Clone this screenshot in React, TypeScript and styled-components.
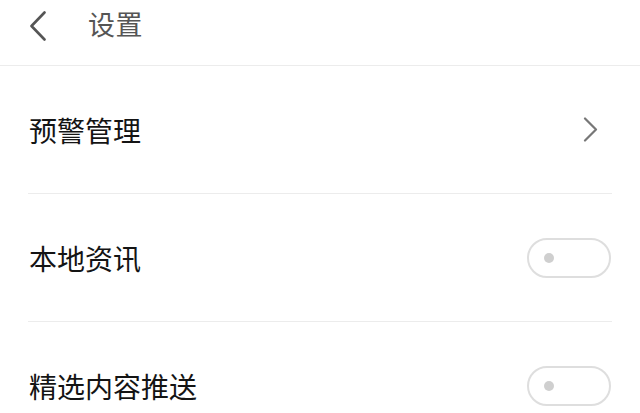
import styled, { createGlobalStyle } from "styled-components";

const GlobalStyle = createGlobalStyle`
	html, body {
		margin: 0;
		padding: 0;
		background: #fff;
	}
	body {
		font-family: "Noto Sans CJK SC", "Noto Sans", sans-serif;
		overflow: hidden;
	}
`;

type Item = { label: string; kind: "link" | "toggle" };

const items: Item[] = [
	{ label: "预警管理", kind: "link" },
	{ label: "本地资讯", kind: "toggle" },
	{ label: "精选内容推送", kind: "toggle" },
];

const BackIcon = () => (
	<svg width="18" height="30" viewBox="0 0 18 30" fill="none">
		<path d="M15.5 1.5 L2.5 15 L15.5 28.5" stroke="#555" strokeWidth="2.6" strokeLinecap="round" strokeLinejoin="round" />
	</svg>
);

const ChevronRight = () => (
	<svg width="15" height="25" viewBox="0 0 15 25" fill="none">
		<path d="M2 1.5 L13 12.5 L2 23.5" stroke="#777" strokeWidth="2.2" strokeLinecap="round" strokeLinejoin="round" />
	</svg>
);

const App = () => {
	return (
		<Page>
			<GlobalStyle />
			<Header>
				<BackButton>
					<BackIcon />
				</BackButton>
				<Title>设置</Title>
			</Header>
			<List>
				{items.map((item) => (
					<Row key={item.label}>
						<Label>{item.label}</Label>
						{item.kind === "link" ? (
							<Arrow>
								<ChevronRight />
							</Arrow>
						) : (
							<Switch>
								<Knob />
							</Switch>
						)}
					</Row>
				))}
			</List>
		</Page>
	);
};

const Page = styled.div`
	width: 640px;
	height: 413px;
	background: #fff;
	overflow: hidden;
`;

const Header = styled.header`
	display: flex;
	align-items: center;
	height: 65px;
	border-bottom: 1px solid #ececec;
	padding-left: 29px;
`;

const BackButton = styled.div`
	display: flex;
	align-items: center;
	width: 18px;
	height: 30px;
	margin-top: -14px;
`;

const Title = styled.h1`
	margin: -18px 0 0 41px;
	font-size: 27px;
	font-weight: 400;
	color: #555;
	letter-spacing: 0.5px;
`;

const List = styled.ul`
	list-style: none;
	margin: 0;
	padding: 0 28px;
`;

const Row = styled.li`
	display: flex;
	align-items: center;
	justify-content: space-between;
	height: 127px;
	border-bottom: 1px solid #ececec;

	&:last-child {
		border-bottom: none;
	}
`;

const Label = styled.span`
	font-size: 28px;
	color: #141414;
	padding-left: 1px;
`;

const Arrow = styled.div`
	display: flex;
	margin-right: 14px;
`;

const Switch = styled.div`
	position: relative;
	box-sizing: border-box;
	width: 84px;
	height: 40px;
	border: 2px solid #dedede;
	border-radius: 20px;
	margin-right: 1px;
`;

const Knob = styled.span`
	position: absolute;
	left: 15px;
	top: 13px;
	width: 10px;
	height: 10px;
	border-radius: 50%;
	background: #cfcfcf;
`;

export default App;
